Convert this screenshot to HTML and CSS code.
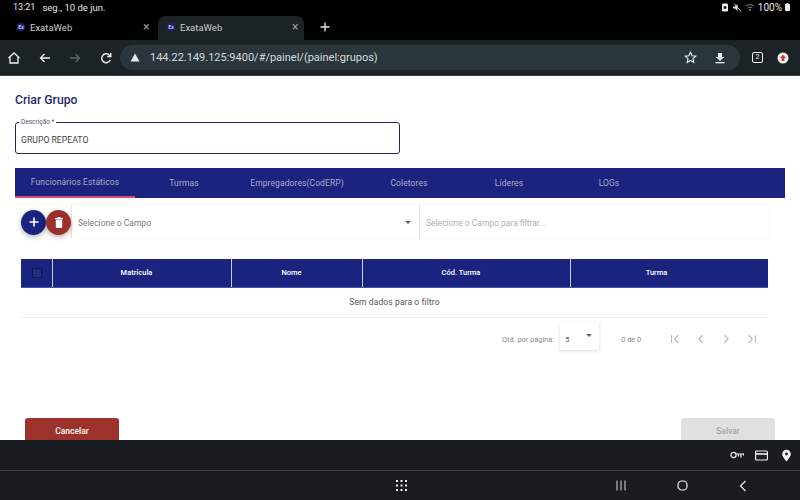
FILE: index.html
```html
<!DOCTYPE html>
<html lang="pt-BR">
<head>
    <meta charset="UTF-8">
    <title>ExataWeb</title>
    <link rel="stylesheet" href="styles.css">
</head>
<body>
    <div class="status-bar">
        <div class="status-left"><span>13:21</span><span class="status-date">seg., 10 de jun.</span></div>
        <div class="status-right">
            <svg width="8" height="9" viewBox="0 0 8 9"><rect x="1" y="0.5" width="6" height="8" rx="1.2" fill="#eee"/><circle cx="4" cy="4.5" r="1.5" fill="#111"/></svg>
            <svg width="10" height="9" viewBox="0 0 10 9"><path d="M1 3.5h2L5.5 1v7L3 5.5H1z" fill="#ddd"/><path d="M2 .5l7 8" stroke="#ddd" stroke-width="1"/></svg>
            <svg width="10" height="9" viewBox="0 0 10 9" fill="none" stroke="#888" stroke-width="1"><path d="M1 3.2c2.4-2 5.6-2 8 0M2.6 5c1.500-1.100 3.300-1.100 4.800 0"/><circle cx="5" cy="7" r=".6" fill="#888"/></svg>
            <span>100%</span>
            <svg class="battery" width="5" height="8" viewBox="0 0 5 8"><rect y="1" width="5" height="7" rx=".8" fill="#eee"/><rect x="1.500" width="2" height="1" fill="#eee"/></svg>
        </div>
    </div>

    <div class="tab-strip">
        <div class="browser-tab">
            <span class="favicon">Ex</span><span class="tab-title">ExataWeb</span><span class="tab-close">×</span>
        </div>
        <div class="browser-tab active">
            <span class="favicon">Ex</span><span class="tab-title">ExataWeb</span><span class="tab-close">×</span>
        </div>
        <svg class="new-tab" width="10" height="10" viewBox="0 0 10 10"><path d="M5 .5v9M.5 5h9" stroke="#e8e8e8" stroke-width="1.300"/></svg>
    </div>

    <div class="toolbar">
        <div class="nav-icons">
            <svg width="14" height="14" viewBox="0 0 14 14" fill="none" stroke="#eee" stroke-width="1.300"><path d="M1.500 7L7 2l5.500 5M3 6v6h8V6"/></svg>
            <svg width="14" height="14" viewBox="0 0 14 14" fill="none" stroke="#eee" stroke-width="1.300"><path d="M12 7H2.500M6.500 3l-4 4 4 4"/></svg>
            <svg width="14" height="14" viewBox="0 0 14 14" fill="none" stroke="#62686b" stroke-width="1.300"><path d="M2 7h9.500M7.500 3l4 4-4 4"/></svg>
            <svg width="14" height="14" viewBox="0 0 14 14" fill="none" stroke="#eee" stroke-width="1.400"><path d="M11.300 9A4.500 4.500 0 1 1 11 4.800"/><path d="M11.800 2v3.500H8.300" /></svg>
        </div>
        <div class="url-pill">
            <svg width="10" height="9" viewBox="0 0 10 9"><path d="M5 .5l4.500 8h-9z" fill="#e8e8e8"/></svg>
            <span class="url-text">144.22.149.125:9400/#/painel/(painel:grupos)</span>
            <svg class="url-star" width="13" height="13" viewBox="0 0 13 13" fill="none" stroke="#eee" stroke-width="1.100"><path d="M6.500 1.200l1.600 3.500 3.700.4-2.800 2.500.8 3.700-3.300-1.900-3.300 1.900.8-3.700L1.200 5.100l3.700-.4z"/></svg>
            <svg width="12" height="12" viewBox="0 0 12 12" fill="#eee"><path d="M4 1h4v4h2.500L6 9 1.500 5H4z"/><rect x="1.500" y="10" width="9" height="1.300"/></svg>
        </div>
        <span class="tab-count">2</span>
        <svg class="ext-icon" width="12" height="12" viewBox="0 0 12 12"><circle cx="6" cy="6" r="5.500" fill="#f2f2f2"/><path d="M6 2.800L9 6H7.300v3H4.700V6H3z" fill="#c9353a"/></svg>
    </div>

    <main class="page">
        <h1 class="page-title">Criar Grupo</h1>

        <div class="field">
            <span class="field-label">Descrição *</span>
            <span class="field-value">GRUPO REPEATO</span>
        </div>

        <nav class="tabs">
            <a class="tab selected">Funcionários Estáticos</a>
            <a class="tab">Turmas</a>
            <a class="tab">Empregadores(CodERP)</a>
            <a class="tab">Coletores</a>
            <a class="tab">Líderes</a>
            <a class="tab">LOGs</a>
        </nav>

        <div class="filter-row">
            <button class="fab fab-add">
                <svg width="10" height="10" viewBox="0 0 10 10"><path d="M5 .5v9M.5 5h9" stroke="#fff" stroke-width="1.600"/></svg>
            </button>
            <button class="fab fab-delete">
                <svg width="10" height="12" viewBox="0 0 10 12" fill="#fff"><path d="M1 2h8v1.200H1zM3.500 1h3v1h-3zM1.800 3.800h6.400V11a1 1 0 0 1-1 1H2.800a1 1 0 0 1-1-1z"/></svg>
            </button>
            <div class="filter-box">
                <div class="filter-select">
                    <span>Selecione o Campo</span>
                    <i class="caret"></i>
                </div>
                <div class="filter-search">Selecione o Campo para filtrar...</div>
            </div>
        </div>

        <div class="grid-table">
            <div class="grid-head">
                <div class="head-cell"><span class="check"></span></div>
                <div class="head-cell">Matrícula</div>
                <div class="head-cell">Nome</div>
                <div class="head-cell">Cód. Turma</div>
                <div class="head-cell">Turma</div>
            </div>
            <div class="no-data">Sem dados para o filtro</div>
        </div>

        <div class="paginator">
            <span>Qtd. por página:</span>
            <div class="page-size"><span>5</span><i class="caret"></i></div>
            <span class="range">0 de 0</span>
            <div class="page-icons">
                <svg width="12" height="12" viewBox="0 0 14 14"><path d="M3 2.500v9M11 2.500L6.500 7l4.500 4.500"/></svg>
                <svg width="12" height="12" viewBox="0 0 14 14"><path d="M9 2.500L4.500 7 9 11.500"/></svg>
                <svg width="12" height="12" viewBox="0 0 14 14"><path d="M5 2.500L9.500 7 5 11.500"/></svg>
                <svg width="12" height="12" viewBox="0 0 14 14"><path d="M3 2.500L7.500 7 3 11.500M11 2.500v9"/></svg>
            </div>
        </div>

        <div class="actions">
            <button class="btn btn-cancel">Cancelar</button>
            <button class="btn btn-save">Salvar</button>
        </div>
    </main>

    <footer class="system-bar">
        <div class="sys-status">
            <svg class="icon-key" width="14" height="9" viewBox="0 0 14 9" fill="none" stroke="#eee" stroke-width="1.200"><circle cx="3.500" cy="4" r="2.600"/><path d="M6 3h7.500v1.500M11 3.500v3M8.500 3.500v2"/></svg>
            <svg class="icon-card" width="13" height="11" viewBox="0 0 13 11" fill="none" stroke="#eee" stroke-width="1.200"><rect x=".6" y="1" width="11.800" height="9" rx="1"/><path d="M.6 4h11.800" stroke-width="1.600"/></svg>
            <svg class="icon-pin" width="9" height="13" viewBox="0 0 10 13"><path d="M5 0a4.800 4.800 0 0 1 4.800 4.800C9.800 8 5 13 5 13S.2 8 .2 4.800A4.800 4.800 0 0 1 5 0z" fill="#f2f2f2"/><circle cx="5" cy="4.800" r="1.600" fill="#191d21"/></svg>
        </div>
        <div class="sys-nav">
            <svg class="nav-apps" width="11" height="11" viewBox="0 0 11 11" fill="#eee"><rect width="2" height="2"/><rect x="4.500" width="2" height="2"/><rect x="9" width="2" height="2"/><rect y="4.500" width="2" height="2"/><rect x="4.500" y="4.500" width="2" height="2"/><rect x="9" y="4.500" width="2" height="2"/><rect y="9" width="2" height="2"/><rect x="4.500" y="9" width="2" height="2"/><rect x="9" y="9" width="2" height="2"/></svg>
            <svg class="nav-recent" width="10" height="11" viewBox="0 0 10 11" stroke="#ddd" stroke-width="1"><path d="M1 .5v10M5 .5v10M9 .5v10"/></svg>
            <svg class="nav-home" width="11" height="11" viewBox="0 0 11 11" fill="none" stroke="#eee" stroke-width="1.200"><rect x="1" y="1" width="9" height="9" rx="3.800"/></svg>
            <svg class="nav-back" width="8" height="12" viewBox="0 0 8 12" fill="none" stroke="#eee" stroke-width="1.200"><path d="M6.500 1L1.500 6l5 5"/></svg>
        </div>
    </footer>
</body>
</html>
```

FILE: styles.css
```css
* {
    margin: 0;
    padding: 0;
    box-sizing: border-box;
    font-family: Roboto, 'Liberation Sans', sans-serif;
}

body {
    width: 800px;
    height: 500px;
    display: flex;
    flex-direction: column;
    overflow: hidden;
    background: #fff;
}

svg {
    display: block;
    flex-shrink: 0;
}

/* android status bar */
.status-bar {
    height: 14px;
    background: #000;
    color: #e6e6e6;
    font-size: 9px;
    display: flex;
    justify-content: space-between;
    align-items: center;
    padding: 0 10px 0 13px;
}

.status-left {
    display: flex;
    gap: 7px;
}

.status-date {
    font-size: 9.500px;
}

.status-right {
    display: flex;
    align-items: center;
    gap: 3px;
}

.status-right span {
    font-size: 10px;
}

/* chrome tabs */
.tab-strip {
    height: 26px;
    background: #000;
    display: flex;
    align-items: flex-end;
    padding-left: 8px;
    gap: 3px;
}

.browser-tab {
    width: 147px;
    height: 24px;
    display: flex;
    align-items: center;
    padding: 0 0 2px 9px;
    color: #c9cccd;
    font-size: 9.500px;
    border-radius: 8px 8px 0 0;
}

.browser-tab.active {
    width: 146px;
    background: #1c2327;
}

.favicon {
    width: 8px;
    height: 8px;
    border-radius: 50%;
    background: #1a237e;
    color: #fff;
    font-size: 5px;
    line-height: 8px;
    text-align: center;
    margin-right: 5px;
}

.tab-title {
    flex: 1;
}

.tab-close {
    font-size: 12px;
    color: #9a9d9f;
    width: 12px;
}

.new-tab {
    margin: 0 0 8px 13px;
}

/* chrome toolbar */
.toolbar {
    height: 36px;
    background: #1c2327;
    border-bottom: 1px solid #3a3f42;
    display: flex;
    align-items: center;
    padding: 0 11px 0 7px;
}

.nav-icons {
    width: 113px;
    display: flex;
    gap: 16.500px;
}

.url-pill {
    width: 620px;
    height: 25px;
    background: #2b363c;
    border-radius: 13px;
    display: flex;
    align-items: center;
    padding: 0 14px 0 10px;
    color: #d5d9db;
}

.url-text {
    font-size: 11px;
    margin-left: 10px;
    flex: 1;
}

.url-star {
    margin-right: 17px;
}

.tab-count {
    width: 11px;
    height: 11px;
    margin-left: 12px;
    border: 1px solid #eee;
    border-radius: 2px;
    color: #eee;
    font-size: 7px;
    line-height: 9px;
    text-align: center;
}

.ext-icon {
    margin-left: 14px;
}

/* page */
.page {
    height: 364px;
    overflow: hidden;
    background: #fff;
    padding: 0 15px;
}

.page-title {
    color: #1f2a6b;
    font-size: 12.200px;
    font-weight: 500;
    line-height: 14px;
    margin-top: 17px;
}

.field {
    position: relative;
    width: 385px;
    height: 32px;
    margin-top: 15px;
    padding: 3px 0 0 5px;
    border: 1.500px solid #20275f;
    border-radius: 3px;
    display: flex;
    align-items: center;
}

.field-label {
    position: absolute;
    top: -4px;
    left: 3px;
    padding: 0 2px;
    background: #fff;
    color: #555a70;
    font-size: 6.500px;
    line-height: 7px;
}

.field-value {
    font-size: 8.700px;
    color: #444;
}

.tabs {
    height: 30px;
    margin-top: 14px;
    background: #1a237e;
    display: grid;
    grid-template-columns: 120px 98px 128px 96px 104px 96px;
}

.tab {
    display: flex;
    align-items: center;
    justify-content: center;
    color: rgba(255, 255, 255, 0.62);
    font-size: 8.500px;
    letter-spacing: 0.1px;
}

.tab.selected {
    border-bottom: 2px solid #e0456f;
}

.filter-row {
    display: flex;
    align-items: center;
    height: 34px;
    margin-top: 7px;
    padding-left: 6px;
}

.fab {
    width: 25px;
    height: 25px;
    border: none;
    border-radius: 50%;
    display: flex;
    align-items: center;
    justify-content: center;
    box-shadow: 0 2px 5px rgba(0, 0, 0, 0.3);
}

.fab-add {
    background: #1a237e;
}

.fab-delete {
    background: #9c2f2a;
    position: relative;
}

.filter-box {
    flex: 0 0 698px;
    height: 34px;
    display: flex;
    box-shadow: 0 0 2px rgba(0, 0, 0, 0.06);
}

.filter-select {
    width: 348px;
    border-left: 1px solid #e4e4e4;
    padding: 1px 8px 0 6px;
    display: flex;
    align-items: center;
    justify-content: space-between;
    color: #7b7b7b;
    font-size: 8.500px;
}

.caret {
    width: 0;
    height: 0;
    border-left: 3.500px solid transparent;
    border-right: 3.500px solid transparent;
    border-top: 3.500px solid #666;
}

.filter-search {
    flex: 1;
    border-left: 1px solid #e4e4e4;
    padding: 1px 0 0 6px;
    display: flex;
    align-items: center;
    color: #b0b0b0;
    font-size: 8.500px;
}

.grid-table {
    width: 747px;
    margin: 20px 0 0 6px;
}

.grid-head {
    height: 29px;
    background: #1a237e;
    border-bottom: 1px solid #3f51b5;
    display: grid;
    grid-template-columns: 31px 179px 131px 208px 198px;
}

.head-cell {
    display: flex;
    align-items: center;
    justify-content: center;
    color: #fff;
    font-size: 7.500px;
    font-weight: 500;
    border-left: 1px solid #c5cae9;
    padding: 0 11px 2px 0;
}

.head-cell:first-child {
    border-left: none;
    padding: 0;
}

.head-cell:last-child {
    padding-right: 26px;
}

.check {
    width: 10px;
    height: 10px;
    border: 1px solid #11164f;
    background: #232c80;
}

.no-data {
    height: 30px;
    padding-bottom: 2px;
    border-bottom: 1px solid #f0f0f0;
    display: flex;
    align-items: center;
    justify-content: center;
    color: #555;
    font-size: 8.500px;
    letter-spacing: 0.1px;
}

.paginator {
    height: 28px;
    padding-top: 6px;
    margin: 4px 0 0 487px;
    display: flex;
    align-items: center;
    color: #8a8a8a;
    font-size: 7.400px;
}

.page-size {
    width: 39px;
    height: 28px;
    margin: -6px 0 0 6px;
    padding: 0 7px 0 5px;
    display: flex;
    align-items: center;
    justify-content: space-between;
    color: #555;
    box-shadow: 0 1px 3px rgba(0, 0, 0, 0.14);
}

.page-size span {
    padding-top: 6px;
}

.page-size .caret {
    margin-bottom: 2px;
}

.range {
    margin-left: 22px;
}

.page-icons {
    display: flex;
    gap: 13.500px;
    margin-left: 28px;
}

.page-icons path {
    fill: none;
    stroke: #b4b4b4;
    stroke-width: 1.300;
}

.actions {
    display: flex;
    justify-content: space-between;
    padding: 0 10px;
    margin-top: 68px;
}

.btn {
    width: 94px;
    height: 26px;
    border: none;
    border-radius: 3px;
    font-size: 8.500px;
    font-weight: 500;
}

.btn-cancel {
    background: #9c322b;
    color: #fff;
}

.btn-save {
    background: #e0e0e0;
    color: #a6a6a6;
}

/* android bottom bars */
.system-bar {
    flex: 1;
    background: #191d21;
    display: flex;
    flex-direction: column;
}

.sys-status {
    height: 31px;
    border-bottom: 1px solid #3e4245;
    display: flex;
    align-items: center;
    justify-content: flex-end;
    padding: 0 9px 0 0;
}

.icon-card {
    margin: 0 14px 0 11px;
}

.sys-nav {
    flex: 1;
    display: flex;
    align-items: center;
    padding-left: 396px;
}

.nav-recent {
    margin-left: 209px;
}

.nav-home {
    margin-left: 51px;
}

.nav-back {
    margin-left: 51px;
}
```
